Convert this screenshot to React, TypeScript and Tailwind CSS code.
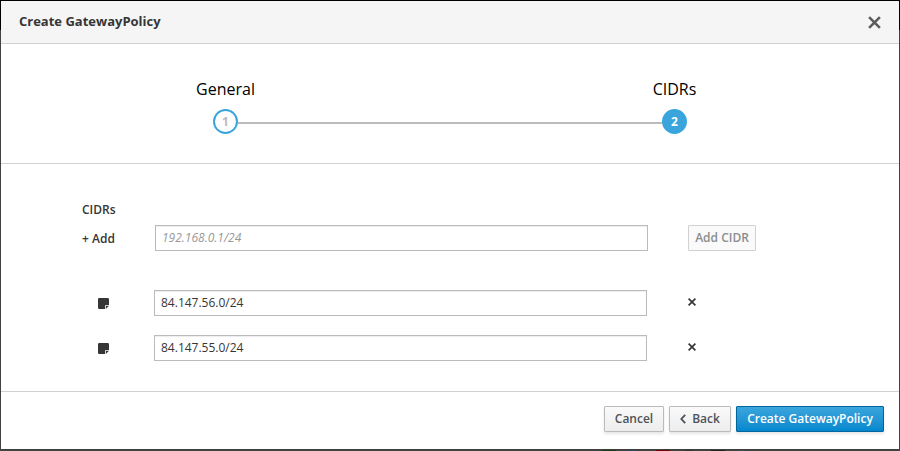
import React from "react";

const steps = [
  { n: 1, label: "General", active: false },
  { n: 2, label: "CIDRs", active: true },
];

function Close() {
  return (
    <svg width="13" height="13" viewBox="0 0 13 13" fill="none" stroke="#5c5c5c" strokeWidth="2.6">
      <path d="M1.1 1.1 11.9 11.9M11.9 1.1 1.1 11.9" />
    </svg>
  );
}

function Note() {
  return (
    <svg width="11" height="11" viewBox="0 0 11 11">
      <path d="M1.3 0h8.4A1.3 1.3 0 0 1 11 1.3V7H8a1 1 0 0 0-1 1v3H1.3A1.3 1.3 0 0 1 0 9.7V1.3A1.3 1.3 0 0 1 1.3 0Z" fill="#363636" />
      <path d="M7.8 7.8H11L7.8 11Z" fill="#363636" />
    </svg>
  );
}

function CidrRow({ value }: { value: string }) {
  return (
    <div className="flex h-[26px] items-center">
      <div className="w-[56px] pl-[16px] pt-px text-[#363636]"><Note /></div>
      <input
        className="ml-[16px] h-[26px] w-[493px] border border-[#bbb] bg-white px-[6px] pb-px text-[12px] text-[#363636] shadow-[inset_0_1px_1px_rgba(3,3,3,0.075)] outline-none"
        defaultValue={value}
      />
      <button className="ml-[41px] pb-[2px]" aria-label="Remove">
        <svg className="block" width="8" height="8" viewBox="0 0 8 8" fill="none" stroke="#363636" strokeWidth="1.7">
          <path d="M.6.6 7.4 7.4M7.4.6.6 7.4" />
        </svg>
      </button>
    </div>
  );
}

const button = "flex h-[26px] items-center justify-center rounded-[1px] border pb-px text-[12px] font-semibold";

export default function App() {
  return (
    <div className="h-[451px] w-[900px] bg-gradient-to-b from-black from-[30px] to-[#484848] to-[30px] px-px pt-px font-['Open_Sans',sans-serif] text-[12px] text-[#363636]">
      <div className="flex h-[448px] w-[898px] flex-col bg-white shadow-[0_1px_3px_rgba(0,0,0,0.2)]">
        <header className="flex h-[43px] shrink-0 items-center justify-between border-b border-[#d1d1d1] bg-[#f5f5f5] pl-[18px] pr-[18px]">
          <h1 className="pb-[2px] text-[13px] font-bold leading-[20px]">Create GatewayPolicy</h1>
          <button aria-label="Close"><Close /></button>
        </header>

        <ol className="flex h-[120px] shrink-0 border-b border-[#d1d1d1] pt-[33px]">
          {steps.map((s) => (
            <li key={s.n} className="flex w-[449px] flex-col items-center text-black">
              <span className="h-[32px] text-[16px] leading-[24px]">{s.label}</span>
              <div className="flex w-full items-center">
                <span className={"h-[2px] flex-1 translate-y-px " + (s.active ? "bg-[#bbb]" : "")} />
                <span
                  className={
                    "flex h-[25px] w-[25px] items-center justify-center rounded-full border-2 border-[#39a5dc] text-[12px] font-bold " +
                    (s.active ? "bg-[#39a5dc] text-white" : "bg-white text-[#bbb]")
                  }
                >
                  {s.n}
                </span>
                <span className={"h-[2px] flex-1 translate-y-px " + (s.active ? "" : "bg-[#bbb]")} />
              </div>
            </li>
          ))}
        </ol>

        <main className="flex-1 pl-[81px] pt-[36px]">
          <h2 className="font-semibold leading-[20px]">CIDRs</h2>
          <div className="mt-[5px] flex h-[26px] items-center">
            <span className="w-[73px] pt-[2px] font-semibold">+ Add</span>
            <input
              placeholder="192.168.0.1/24"
              className="h-[26px] w-[493px] border border-[#bbb] bg-white px-[6px] pb-px text-[12px] shadow-[inset_0_1px_1px_rgba(3,3,3,0.075)] outline-none placeholder:italic placeholder:text-[#999]"
            />
            <button className={button + " ml-[40px] w-[68px] border-[#d1d1d1] bg-[#fafafa] text-[#8b8d8f]"}>Add CIDR</button>
          </div>
          <div className="mt-[39px] flex flex-col gap-[19px]">
            <CidrRow value="84.147.56.0/24" />
            <CidrRow value="84.147.55.0/24" />
          </div>
        </main>

        <footer className="flex h-[58px] shrink-0 justify-end gap-[5px] border-t border-[#d1d1d1] pr-[15px] pt-[14px]">
          <button className={button + " w-[60px] border-[#bbb] bg-gradient-to-b from-[#fafafa] to-[#ededed] text-[#4d5258] shadow-[0_2px_3px_rgba(3,3,3,0.1)]"}>Cancel</button>
          <button className={button + " w-[62px] gap-[6px] border-[#bbb] bg-gradient-to-b from-[#fafafa] to-[#ededed] text-[#4d5258] shadow-[0_2px_3px_rgba(3,3,3,0.1)]"}>
            <svg width="6" height="10" viewBox="0 0 6 10" fill="none" stroke="#4d5258" strokeWidth="1.8">
              <path d="M5.2.8 1.3 5l3.9 4.2" />
            </svg>
            Back
          </button>
          <button className={button + " w-[148px] border-[#00659c] bg-gradient-to-b from-[#39a5dc] to-[#0088ce] text-white shadow-[0_2px_3px_rgba(3,3,3,0.1)]"}>Create GatewayPolicy</button>
        </footer>
      </div>
      <div className="relative flex h-[2px] pl-[601px] pt-px">
        <span className="w-[14px] bg-[#173f10]" />
        <span className="ml-[14px] w-[5px] bg-[#2b5263]" />
        <span className="ml-[21px] w-[14px] bg-[#700]" />
        <span className="ml-[15px] w-[8px] bg-[#333]" />
        <span className="ml-[18px] w-[14px] bg-[#222]" />
        <span className="ml-[14px] w-[5px] bg-[#2b5263]" />
      </div>
    </div>
  );
}
